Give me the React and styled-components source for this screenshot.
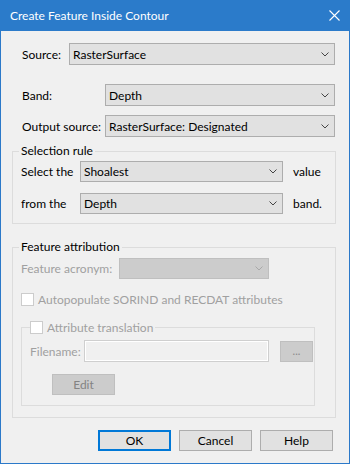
import React from "react";
import styled, { createGlobalStyle } from "styled-components";

const GlobalStyle = createGlobalStyle`
  html, body {
    margin: 0;
    padding: 0;
    background: #ffffff;
  }
  body {
    font-family: Lato, "Noto Sans", sans-serif;
    font-size: 12px;
  }
`;

const Chevron = ({ disabled }) => (
  <svg width="8" height="5" viewBox="0 0 8 5">
    <path
      d="M0.5 0.5 L4 4 L7.5 0.5"
      fill="none"
      stroke={disabled ? "#a8a8a8" : "#444"}
      strokeWidth="1"
    />
  </svg>
);

const Combo = ({ value, width, height = 22, disabled }) => (
  <ComboBox $width={width} $height={height} $disabled={disabled}>
    <ComboText>{value}</ComboText>
    <Chevron disabled={disabled} />
  </ComboBox>
);

const App = () => {
  return (
    <>
      <GlobalStyle />
      <Window>
        <TitleBar>
          <Title>Create Feature Inside Contour</Title>
          <svg width="11" height="11" viewBox="0 0 11 11">
            <path d="M0.5 0.5 L10.5 10.5 M10.5 0.5 L0.5 10.5" stroke="#fff" strokeWidth="1.1" />
          </svg>
        </TitleBar>
        <Body>
          <Row $left={10} $top={12}>
            <Label $width={47}>Source:</Label>
            <Combo value="RasterSurface" width={266} />
          </Row>
          <Row $left={10} $top={19}>
            <Label $width={83}>Band:</Label>
            <Combo value="Depth" width={230} />
          </Row>
          <Row $left={10} $top={9}>
            <Label $width={83}>Output source:</Label>
            <Combo value="RasterSurface: Designated" width={230} />
          </Row>

          <Group $top={6} $bottom={9}>
            <Legend>Selection rule</Legend>
            <Row $top={2}>
              <Label $width={59}>Select the</Label>
              <Combo value="Shoalest" width={203} height={21} />
              <Suffix>value</Suffix>
            </Row>
            <Row $top={11}>
              <Label $width={59}>from the</Label>
              <Combo value="Depth" width={203} height={21} />
              <Suffix>band.</Suffix>
            </Row>
          </Group>

          <Group $top={15} $bottom={11}>
            <Legend>Feature attribution</Legend>
            <Row $top={3}>
              <Label $width={98} $disabled>Feature acronym:</Label>
              <Combo width={150} height={21} disabled />
            </Row>
            <CheckRow $top={12}>
              <CheckBox />
              <Label $disabled>Autopopulate SORIND and RECDAT attributes</Label>
            </CheckRow>
            <InnerGroup>
              <CheckLegend>
                <CheckBox />
                <Label $disabled>Attribute translation</Label>
              </CheckLegend>
              <Row $top={5}>
                <Label $width={54} $disabled>Filename:</Label>
                <TextBox />
                <SmallButton>...</SmallButton>
              </Row>
              <Row $top={12} $left={22}>
                <DisabledButton>Edit</DisabledButton>
              </Row>
            </InnerGroup>
          </Group>

          <Footer>
            <Button $primary>OK</Button>
            <Button>Cancel</Button>
            <Button>Help</Button>
          </Footer>
        </Body>
      </Window>
    </>
  );
};

export default App;

const Window = styled.div`
  width: 350px;
  height: 464px;
  box-sizing: border-box;
  border: 1px solid #2b79c9;
  border-top: none;
  background: #f0f0f0;
  display: flex;
  flex-direction: column;
  color: #000;
`;

const TitleBar = styled.div`
  height: 31px;
  margin: 0 -1px;
  background: #2b7bca;
  display: flex;
  align-items: center;
  justify-content: space-between;
  padding: 0 10px 1px 10px;
  box-sizing: border-box;
`;

const Title = styled.span`
  color: #fff;
  font-size: 12px;
`;

const Body = styled.div`
  display: flex;
  flex-direction: column;
  padding: 0 13px 0 11px;
`;

const Row = styled.div`
  display: flex;
  align-items: center;
  margin-top: ${(p) => p.$top || 0}px;
  padding-left: ${(p) => p.$left || 0}px;
`;

const CheckRow = styled(Row)`
  height: 16px;
  gap: 4px;
`;

const Label = styled.span`
  width: ${(p) => (p.$width ? `${p.$width}px` : "auto")};
  flex: none;
  white-space: nowrap;
  color: ${(p) => (p.$disabled ? "#a0a0a0" : "#000")};
`;

const Suffix = styled.span`
  margin-left: 10px;
`;

const ComboBox = styled.div`
  width: ${(p) => p.$width}px;
  height: ${(p) => p.$height}px;
  flex: none;
  box-sizing: border-box;
  border: 1px solid ${(p) => (p.$disabled ? "#bfbfbf" : "#adadad")};
  background: ${(p) => (p.$disabled ? "#cccccc" : "#e1e1e1")};
  display: flex;
  align-items: center;
  justify-content: space-between;
  padding: 0 5px 0 3px;
`;

const ComboText = styled.span`
  white-space: nowrap;
`;

const Group = styled.fieldset`
  margin: ${(p) => p.$top}px 0 0 0;
  padding: 0 8px ${(p) => p.$bottom}px 8px;
  border: 1px solid #dcdcdc;
  min-width: 0;
`;

const Legend = styled.legend`
  padding: 0 2px;
  margin-left: -2px;
  line-height: 16px;
`;

const InnerGroup = styled.fieldset`
  margin: 12px 12px 0 0;
  padding: 0 8px 10px 8px;
  border: 1px solid #dcdcdc;
  min-width: 0;
`;

const CheckLegend = styled.legend`
  padding: 0 2px 0 0;
  display: flex;
  align-items: center;
  gap: 4px;
  height: 16px;
`;

const CheckBox = styled.span`
  width: 13px;
  height: 13px;
  box-sizing: border-box;
  border: 1px solid #cccccc;
  background: #ffffff;
  flex: none;
`;

const TextBox = styled.div`
  width: 185px;
  height: 22px;
  flex: none;
  box-sizing: border-box;
  border: 1px solid #cfcfcf;
  box-shadow: inset 0 0 0 1px #ffffff;
  background: #f0f0f0;
`;

const DisabledButton = styled.div`
  width: 63px;
  height: 21px;
  flex: none;
  box-sizing: border-box;
  border: 1px solid #bfbfbf;
  background: #cccccc;
  color: #838383;
  display: flex;
  align-items: center;
  justify-content: center;
`;

const SmallButton = styled(DisabledButton)`
  width: 33px;
  margin-left: 11px;
  font-size: 11px;
  color: #8a8a8a;
  padding-bottom: 2px;
`;

const Footer = styled.div`
  display: flex;
  justify-content: flex-end;
  gap: 8px;
  margin-top: 12px;
  padding-right: 3px;
`;

const Button = styled.div`
  width: 73px;
  height: 21px;
  box-sizing: border-box;
  border: ${(p) => (p.$primary ? "2px solid #0078d7" : "1px solid #adadad")};
  background: #e1e1e1;
  display: flex;
  align-items: center;
  justify-content: center;
`;
